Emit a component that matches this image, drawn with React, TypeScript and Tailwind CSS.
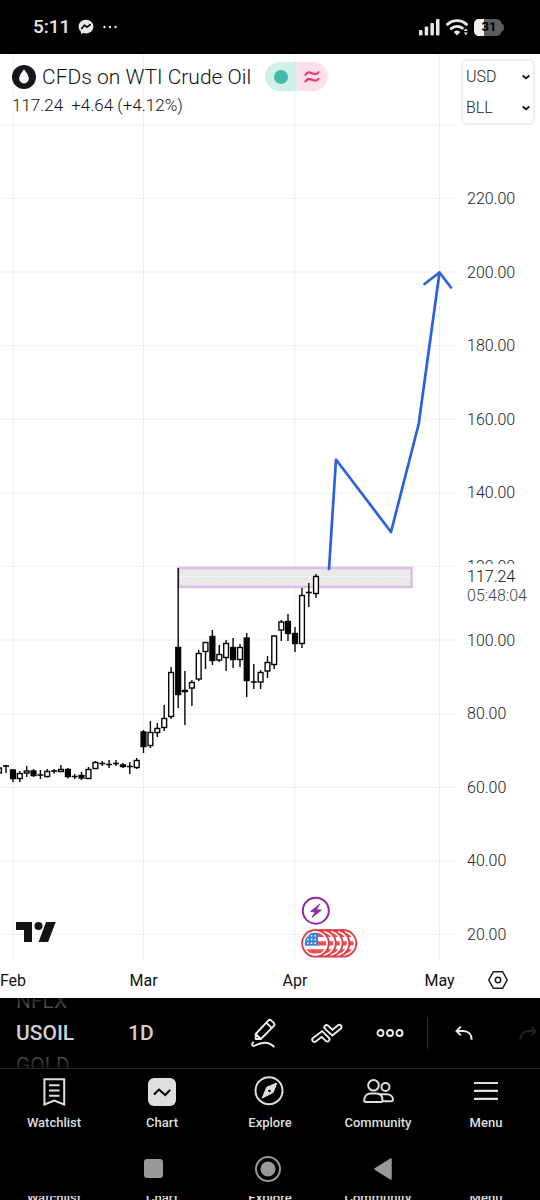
import React from "react";

type Kind = "up" | "down" | "doji";
type Candle = [x: number, kind: Kind, high: number, top: number, bottom: number, low: number];

const candles: Candle[] = [
  [-1, "up", 767, 768, 773, 774],
  [6, "doji", 765, 766, 766, 773],
  [13, "down", 769, 770, 778.5, 782],
  [19.8, "up", 771, 773.5, 778.5, 782],
  [26.7, "up", 766, 771, 773, 777],
  [33.5, "down", 769, 771, 775.5, 777],
  [40.4, "doji", 770, 775, 775, 779],
  [47.2, "up", 769, 771.5, 776.5, 777.5],
  [54.1, "doji", 769, 771, 771, 773.5],
  [60.9, "up", 765, 769.5, 771.5, 772],
  [67.9, "down", 768, 769.5, 776.5, 778.5],
  [74.7, "doji", 774, 776.5, 776.5, 779],
  [81.5, "down", 772, 775.5, 778, 780],
  [88.5, "up", 767, 769.5, 778.5, 779],
  [95.4, "up", 761, 762.5, 768.5, 769],
  [102.3, "doji", 761, 763.5, 763.5, 766],
  [109.1, "doji", 760, 764.5, 764.5, 768],
  [116, "doji", 760, 763.5, 763.5, 766],
  [122.9, "down", 763, 765, 766.5, 768],
  [129.8, "doji", 762, 766.5, 766.5, 774],
  [136.7, "up", 758, 760.5, 767.5, 769],
  [143.5, "down", 730, 732, 746.5, 753],
  [150.4, "up", 721, 732.5, 745.5, 748],
  [157.3, "up", 723, 728.5, 732.5, 737],
  [164.2, "up", 705, 718.5, 727.5, 731],
  [171.1, "up", 667, 672.5, 716.5, 719],
  [178.2, "down", 568, 647.5, 694.5, 708],
  [184.9, "down", 671, 690.5, 691.5, 725],
  [191.9, "up", 680, 682.5, 688, 706],
  [198.7, "up", 650, 653.5, 679, 681],
  [205.5, "up", 642, 642.5, 651.5, 669],
  [212.4, "down", 630, 636.5, 660.5, 665],
  [219.3, "up", 645, 654.5, 660, 662],
  [226.1, "up", 640, 643.5, 657.5, 671],
  [233.1, "down", 638, 647.5, 659.5, 668],
  [240, "up", 644, 647.5, 659.5, 667],
  [246.7, "down", 633, 638, 680.5, 697],
  [253.8, "doji", 664, 682, 682, 689],
  [260.6, "up", 670, 672.5, 682, 689],
  [267.5, "up", 656, 662.5, 671, 678],
  [274.2, "up", 635, 636, 664.5, 669],
  [281.3, "up", 620, 622, 630, 641],
  [288, "down", 614, 621.5, 633.5, 641],
  [295, "down", 627, 633.5, 643.5, 652],
  [302, "up", 588, 595.5, 643.5, 648],
  [308.8, "doji", 583, 592.5, 592.5, 607],
  [316, "up", 574, 576.5, 593.5, 598],
];

const gridX = [13, 143.5, 295, 439.5];
const gridY = [125, 198.5, 272, 345.6, 419.3, 493, 566.5, 640, 714, 787.5, 861, 934.5];
const months = ["Feb", "Mar", "Apr", "May"];
const prices = ["220.00", "200.00", "180.00", "160.00", "140.00", "120.00", "100.00", "80.00", "60.00", "40.00", "20.00"];

function StatusBar() {
  return (
    <div className="flex h-[54px] shrink-0 items-center bg-black pr-9 pl-[33px] text-[#e8e8e8]">
      <span className="text-[19px] leading-6 font-medium">5:11</span>
      <svg className="ml-2 h-4 w-4" viewBox="0 0 16 16" aria-hidden="true">
        <path d="M8 .7C3.7.7.6 3.7.6 7.6c0 2.1.9 3.9 2.3 5.1l.1 2.4 2.3-1c.8.3 1.7.4 2.7.4 4.3 0 7.4-3 7.4-6.9S12.3.7 8 .7z" fill="#e8e8e8" />
        <path d="M3.8 9.4 6.5 6.2l2.5 2 3.2-2.6" fill="none" stroke="#000" strokeWidth="1.7" strokeLinejoin="round" strokeLinecap="round" />
      </svg>
      <svg className="ml-2 h-4 w-4" viewBox="0 0 16 16" fill="#e8e8e8" aria-hidden="true">
        <circle cx="2.5" cy="8" r="1.2" /><circle cx="8" cy="8" r="1.2" /><circle cx="13.5" cy="8" r="1.2" />
      </svg>
      <svg className="ml-auto h-[18px] w-[21px]" viewBox="0 0 21 18" fill="#e8e8e8" aria-hidden="true">
        <rect x="0" y="12" width="3.5" height="5.5" rx="1" />
        <rect x="5.7" y="8.5" width="3.5" height="9" rx="1" />
        <rect x="11.4" y="5" width="3.5" height="12.5" rx="1" />
        <rect x="17" y="1" width="3.5" height="16.5" rx="1" />
      </svg>
      <svg className="ml-[6px] h-[18px] w-[22px]" viewBox="0 0 22 18" fill="none" aria-hidden="true">
        <path d="M1.5 6.4a14 14 0 0 1 19 0" stroke="#e8e8e8" strokeWidth="2.8" strokeLinecap="round" />
        <path d="M5.2 10.6a8.7 8.7 0 0 1 11.200-.4" stroke="#e8e8e8" strokeWidth="2.8" strokeLinecap="round" />
        <path d="M7.8 14a4.8 4.8 0 0 1 6.400 0L11 17.500z" fill="#e8e8e8" />
        <path d="m19.800 10.300 2 2.700h-4zM19.800 17.300l2-2.700h-4z" fill="#e8e8e8" />
      </svg>
      <div className="relative ml-[6px] flex h-[17px] w-[30px] items-center justify-center text-[13px] leading-4 font-bold text-black">
        <svg className="absolute inset-0 h-full w-full" viewBox="0 0 30 17" aria-hidden="true">
          <path d="M5.500 0H22c3 0 5 1.500 5.500 4.500 1.500.3 2.500 1.500 2.500 4s-1 3.700-2.500 4C27 15.500 25 17 22 17H5.500C2 17 0 15 0 11.500v-6C0 2 2 0 5.500 0z" fill="#5c5c5c" />
          <path d="M10 0H5.500C2 0 0 2 0 5.500v6C0 15 2 17 5.500 17H10z" fill="#f0f0f0" />
        </svg>
        <span className="relative">31</span>
      </div>
    </div>
  );
}

function Flag() {
  return (
    <>
      <circle r="14.300" fill="#de4049" />
      <circle r="12.400" fill="#fff" />
      <g clipPath="url(#flag-disc)">
        <path d="M-11-8.300H11M-11 0H11M-11 8H11" stroke="#ea5158" strokeWidth="4.200" />
        <rect x="-11" y="-11" width="13.500" height="13.300" fill="#3b86dc" />
        <path d="M-8.500-7.500H1.500M-8.500-3.800H1.500M-8.500-.1H1.500" stroke="#fff" strokeWidth="1.600" strokeDasharray="1.600 2.100" />
      </g>
    </>
  );
}

function PriceChart() {
  return (
    <svg className="block h-auto w-full" viewBox="0 54 456 906" role="img" aria-label="WTI crude oil price chart">
      <defs>
        <clipPath id="flag-disc"><circle r="10.800" /></clipPath>
      </defs>
      <g stroke="#efefef" strokeWidth="1">
        {gridX.map((x) => <path key={x} d={`M${x} 54V960`} />)}
        {gridY.map((y) => <path key={y} d={`M0 ${y}H456`} />)}
      </g>
      <rect x="178.500" y="568" width="233" height="19" fill="#e9e9e9" stroke="#dcbde3" strokeWidth="2.500" />
      <path d="M180 576.500H410" stroke="#fff" strokeWidth="1.200" strokeDasharray="1.700 1.700" />
      {candles.map(([x, kind, high, top, bottom, low]) => (
        <g key={x} stroke="#050505">
          <path d={`M${x} ${high}V${low}`} strokeWidth="1.400" />
          {kind === "doji" ? (
            <path d={`M${x - 3} ${top}h6`} strokeWidth="1.600" />
          ) : (
            <rect x={x - 2.4} y={top} width="4.800" height={bottom - top} fill={kind === "up" ? "#fff" : "#050505"} strokeWidth="1.400" />
          )}
        </g>
      ))}
      <g fill="none" stroke="#2b60df" strokeWidth="2.700" strokeLinecap="round" strokeLinejoin="round">
        <path d="M329 569 336 459.500 391 532 418.700 424 439.500 272.500" />
        <path d="M424.500 284 439.500 272.500 451 287.500" />
      </g>
      <g fill="#141414">
        <path d="M16 922h16v20h-8v-12h-8zM46 922h9.700l-7.600 20h-9.500z" />
        <circle cx="38.500" cy="926" r="4" />
      </g>
      <circle cx="315.800" cy="910.700" r="13" fill="#fff" stroke="#8e2ba6" strokeWidth="2" />
      <path d="M319.800 904 310.500 911.500l4.700.5-3.300 5.500 9.500-7.300-4.900-.6z" fill="#8e2ba6" stroke="#8e2ba6" strokeWidth=".8" strokeLinejoin="round" />
      {[342.9, 336, 329.2, 322.4, 315.5].map((x) => (
        <g key={x} transform={`translate(${x} 943.300)`}><Flag /></g>
      ))}
    </svg>
  );
}

function ChartHeader() {
  return (
    <div className="absolute top-2 left-3">
      <div className="flex h-[29px] items-center">
        <svg className="h-6 w-6" viewBox="0 0 24 24" aria-hidden="true">
          <circle cx="12" cy="12" r="12" fill="#14181c" />
          <path d="M12 4.300c2.400 3.300 4.800 6.200 4.800 9.300A4.700 4.700 0 0 1 12 18.400a4.700 4.700 0 0 1-4.800-4.800c0-3.100 2.400-6 4.800-9.300z" fill="#fff" />
        </svg>
        <h1 className="ml-[6px] text-[21px] leading-7 font-light whitespace-nowrap text-[#111]">CFDs on WTI Crude Oil</h1>
        <div className="ml-[14px] flex h-[29px] w-[63px] overflow-hidden rounded-full">
          <span className="flex flex-1 items-center justify-center bg-[#d3efe9]">
            <span className="h-[14px] w-[14px] rounded-full bg-[#42bda8]" />
          </span>
          <span className="flex flex-1 items-center justify-center bg-[#fddfe9]">
            <svg className="h-3 w-4" viewBox="0 0 16 12" fill="none" stroke="#e63e7b" strokeWidth="2.200" strokeLinecap="round" aria-hidden="true">
              <path d="M1.500 3.800C3 .8 5.500 1 8 2.200s5 1.600 6.500-1M1.500 10.400C3 7.400 5.500 7.600 8 8.800s5 1.600 6.500-1" />
            </svg>
          </span>
        </div>
      </div>
      <p className="flex gap-2 text-[17px] leading-7 font-light text-[#111]">
        <span>117.24</span>
        <span>+4.64 (+4.12%)</span>
      </p>
    </div>
  );
}

function UnitSelect({ label, value }: { label: string; value: string }) {
  return (
    <div className="flex h-[31px] items-center">
      <select aria-label={label} defaultValue={value} className="w-full appearance-none bg-transparent text-[16px] leading-6 font-light text-[#222]">
        <option>{value}</option>
      </select>
      <svg className="h-2 w-2 shrink-0" viewBox="0 0 8 8" fill="none" stroke="#111" strokeWidth="1.800" aria-hidden="true">
        <path d="M.7 2.500 4 5.400 7.300 2.500" />
      </svg>
    </div>
  );
}

function PriceAxis() {
  return (
    <div className="relative flex w-[84px] shrink-0 flex-col pb-[15px]">
      <div className="mx-[5px] mt-[5px] rounded-md border-2 border-[#efefef] bg-white px-[3px]">
        <UnitSelect label="Currency" value="USD" />
        <UnitSelect label="Unit" value="BLL" />
      </div>
      <ol className="mt-16 flex flex-1 flex-col justify-between pl-[11px] text-[16px] leading-5 font-light text-[#222]">
        {prices.map((p) => <li key={p}>{p}</li>)}
      </ol>
      <div className="absolute top-[510px] right-0 left-[11px] bg-white pt-[3px] text-[16px] leading-[19px] font-light">
        <p className="text-[#111]">117.24</p>
        <p className="text-[#444]">05:48:04</p>
      </div>
    </div>
  );
}

function TimeAxis() {
  return (
    <div className="flex h-[38px] bg-white text-[16px] leading-5 text-[#111]">
      <div className="relative min-w-0 flex-1">
        {months.map((m, i) => (
          <span key={m} className="absolute top-[11px] -translate-x-1/2" style={{ left: `${(gridX[i] / 456) * 100}%` }}>{m}</span>
        ))}
      </div>
      <button aria-label="Chart settings" className="flex w-[84px] shrink-0 items-center justify-center pt-[2px]">
        <svg className="h-5 w-5" viewBox="0 0 20 20" fill="none" stroke="#1a1a1a" strokeWidth="1.500" aria-hidden="true">
          <path d="M5.300 1.800h9.400L19.300 10l-4.600 8.200H5.300L.7 10z" strokeLinejoin="round" />
          <circle cx="10" cy="10" r="2.700" />
        </svg>
      </button>
    </div>
  );
}

function Toolbar() {
  return (
    <div className="flex h-[71px] shrink-0 items-center overflow-hidden border-b border-[#242424] bg-black">
      <div className="flex h-full w-28 shrink-0 flex-col justify-center overflow-hidden pl-4 text-left text-[21px] leading-8">
        <button className="block shrink-0 bg-linear-to-b from-[#1c1c1c] from-35% to-[#555] to-75% bg-clip-text text-left text-transparent">NFLX</button>
        <button className="block shrink-0 text-left font-medium text-[#d0d0d0]">USOIL</button>
        <button className="block shrink-0 bg-linear-to-b from-[#505050] from-25% to-[#1c1c1c] to-60% bg-clip-text text-left text-transparent">GOLD</button>
      </div>
      <button className="w-[120px] shrink-0 pl-4 text-left text-[21px] leading-8 font-medium text-[#d0d0d0]">1D</button>
      <button aria-label="Draw" className="flex w-[63px] shrink-0 justify-center">
        <svg className="h-[30px] w-[26px]" viewBox="0 0 26 30" fill="none" stroke="#eee" strokeWidth="1.900" strokeLinecap="round" strokeLinejoin="round" aria-hidden="true">
          <path d="M4.700 21V16L17.200 2.700c1-1 2.300-1 3.200-.1l2.300 2.300c1 1 1 2.200 0 3.200L9.800 21zM15.300 4.700l5.500 5.500M4.700 16l5.100 5" />
          <path d="M2 24.500C.5 26 1 29 4 27.500c7-3.500 14-3.500 18.700 1" />
        </svg>
      </button>
      <button aria-label="Indicators" className="flex w-[63px] shrink-0 justify-center">
        <svg className="h-5 w-8" viewBox="0 0 32 20" fill="none" strokeLinecap="round" aria-hidden="true">
          <g stroke="#eee" strokeWidth="6.200">
            <path d="M3.400 16.700 10.900 11l5.400 5.300" />
            <path d="M15.500 4.300 21.400 9.600 28.300 4" />
          </g>
          <g stroke="#000" strokeWidth="2.500">
            <path d="M3.400 16.700 10.900 11l5.400 5.300" />
            <path d="M15.500 4.300 21.400 9.600 28.300 4" />
          </g>
        </svg>
      </button>
      <button aria-label="More" className="flex w-[63px] shrink-0 justify-center">
        <svg className="h-2 w-7" viewBox="0 0 28 8" fill="none" stroke="#eee" strokeWidth="1.900" aria-hidden="true">
          <circle cx="4.500" cy="4" r="3" /><circle cx="14" cy="4" r="3" /><circle cx="23.500" cy="4" r="3" />
        </svg>
      </button>
      <div className="ml-[6px] h-8 w-px shrink-0 bg-[#303030]" />
      <button aria-label="Undo" className="ml-1 flex w-16 shrink-0 justify-center">
        <svg className="h-[14px] w-[18px]" viewBox="0 0 18 14" fill="none" stroke="#eee" strokeWidth="1.900" aria-hidden="true">
          <path d="M5.800.7 1.500 5l4.300 4.300M1.500 5h6.800c5.300 0 8.400 3.500 8.400 8.700" />
        </svg>
      </button>
      <button aria-label="Redo" disabled className="flex w-16 shrink-0 justify-center">
        <svg className="h-[14px] w-[18px]" viewBox="0 0 18 14" fill="none" stroke="#222" strokeWidth="1.900" aria-hidden="true">
          <path d="M12.200.7 16.500 5l-4.300 4.300M16.500 5H9.700C4.400 5 1.300 8.500 1.300 13.700" />
        </svg>
      </button>
    </div>
  );
}

const tabs: { name: string; icon: React.ReactNode }[] = [
  {
    name: "Watchlist",
    icon: <path d="M5.400 2.200h19.800v25.300L15.300 23.500l-9.900 4zM10 8.200h10.500M10 13.500h10.500M10 18.700h10.500" />,
  },
  {
    name: "Chart",
    icon: (
      <>
        <rect x="1" y="1" width="28" height="28" rx="6" fill="#dedede" stroke="none" />
        <path d="m7 17.500 5-5 6.200 5.500 4.900-5" stroke="#000" />
      </>
    ),
  },
  {
    name: "Explore",
    icon: (
      <>
        <circle cx="14" cy="13.700" r="13.500" />
        <path d="M21.800 6 18.200 15.400 7.300 21l4.300-10.700z" fill="#dedede" strokeWidth="1" />
        <circle cx="14.500" cy="14" r="1.300" fill="#000" stroke="none" />
      </>
    ),
  },
  {
    name: "Community",
    icon: (
      <>
        <circle cx="10.500" cy="8.300" r="5.300" />
        <circle cx="22.500" cy="10" r="4" />
        <path d="M1.200 23.500c0-4.600 3-7 6.500-7h5.800c3.600 0 6 2.400 6 7 0 1-.5 1.500-1.500 1.500H2.700c-1 0-1.500-.5-1.500-1.500zM17.500 17.300h6.200c4 0 6.300 2.700 6.300 5.500 0 .9-.5 1.400-1.400 1.400h-9" />
      </>
    ),
  },
  { name: "Menu", icon: <path d="M3 6h24M3 13.900h24M3 21.800h24" strokeWidth="2.200" /> },
];

function TabBar() {
  return (
    <nav className="grid h-[72px] shrink-0 grid-cols-5 bg-black pt-2 text-[13px] leading-5 font-medium text-[#dedede]">
      {tabs.map((t) => (
        <a key={t.name} href="#" className="flex flex-col items-center">
          <svg className="h-[30px] w-[30px] overflow-visible" viewBox="0 0 30 30" fill="none" stroke="#dedede" strokeWidth="2" aria-hidden="true">{t.icon}</svg>
          <span className="mt-[6px]">{t.name}</span>
        </a>
      ))}
    </nav>
  );
}

function SystemBar() {
  return (
    <div className="flex h-[55px] shrink-0 items-center justify-center bg-black pr-1">
      <button aria-label="Recent apps" className="flex w-[115px] justify-center">
        <span className="h-[19px] w-[19px] rounded-[3px] bg-[#999]" />
      </button>
      <button aria-label="Home" className="flex w-[115px] justify-center">
        <svg className="h-[26px] w-[26px]" viewBox="0 0 26 26" aria-hidden="true">
          <circle cx="13" cy="13" r="12" fill="none" stroke="#999" strokeWidth="2" />
          <circle cx="13" cy="13" r="7.500" fill="#999" />
        </svg>
      </button>
      <button aria-label="Back" className="flex w-[115px] justify-center">
        <svg className="h-[22px] w-[18px]" viewBox="0 0 18 22" aria-hidden="true">
          <path d="M17 1v20L1 11z" fill="#999" stroke="#999" strokeWidth="1.500" strokeLinejoin="round" />
        </svg>
      </button>
    </div>
  );
}

export default function App() {
  return (
    <div className="flex min-h-screen flex-col overflow-hidden bg-black font-[Roboto,sans-serif]">
      <StatusBar />
      <main className="bg-white">
        <div className="flex">
          <div className="relative min-w-0 flex-1">
            <PriceChart />
            <ChartHeader />
          </div>
          <PriceAxis />
        </div>
        <TimeAxis />
      </main>
      <Toolbar />
      <TabBar />
      <SystemBar />
      <div aria-hidden="true" className="grid h-1 shrink-0 grid-cols-5 overflow-hidden bg-black text-center text-[13px] leading-1 font-medium text-[#dedede]">
        {tabs.map((t) => <span key={t.name}>{t.name}</span>)}
      </div>
    </div>
  );
}
